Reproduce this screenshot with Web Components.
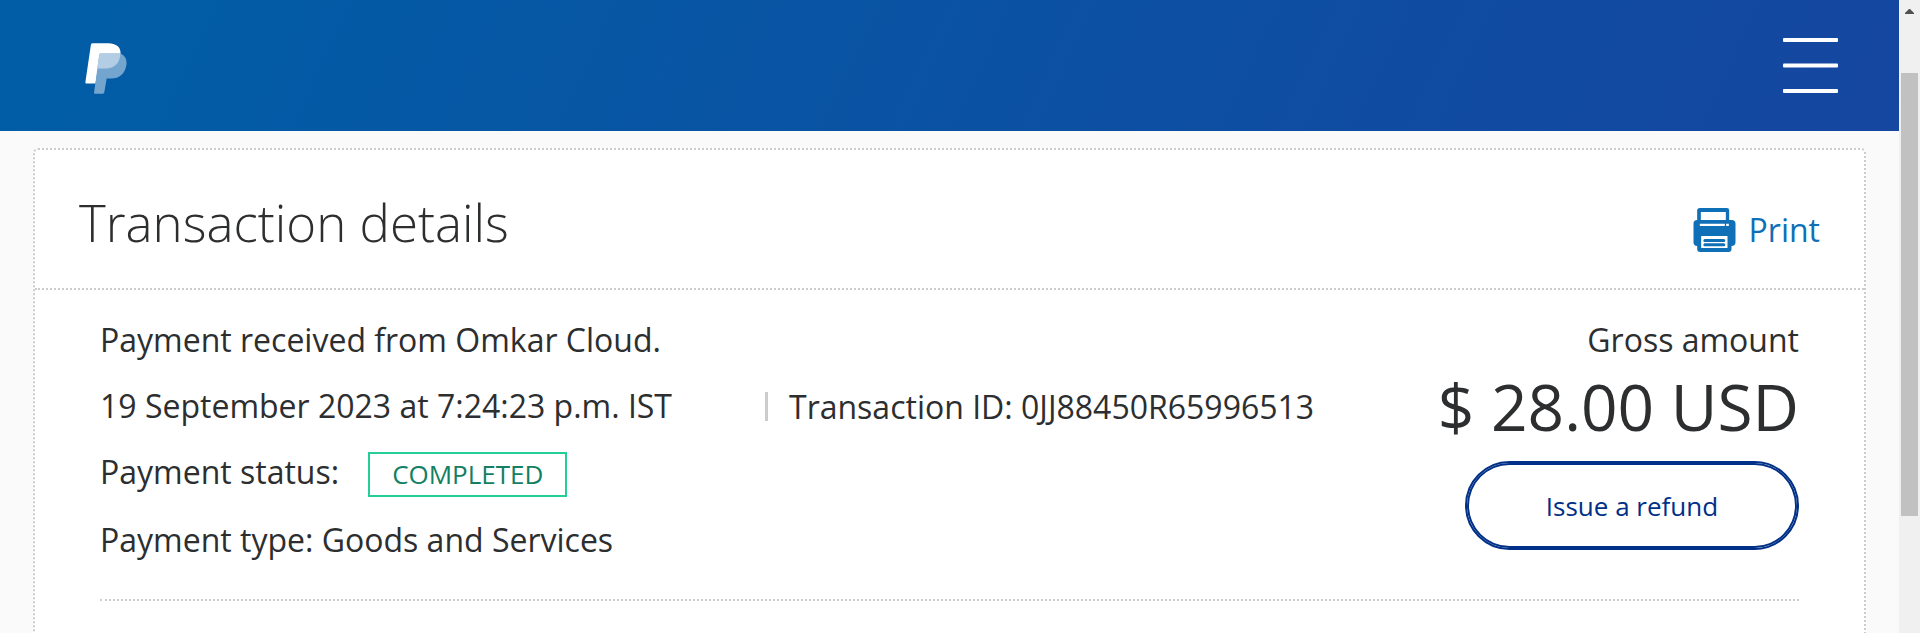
<!DOCTYPE html>
<html lang="en">
<head>
<meta charset="utf-8">
<title>Transaction details</title>
<style>
  html, body { margin: 0; height: 100%; overflow: hidden; }
  body { font-family: "Open Sans", "Noto Sans", sans-serif; font-size: 32px; color: #2c2e2f; background: #fafafa; }
</style>
</head>
<body>
<app-shell>
  <site-header></site-header>
  <transaction-card heading="Transaction details">
    <detail-row>Payment received from Omkar Cloud.</detail-row>
    <detail-row>19 September 2023 at 7:24:23 p.m. IST<span slot="second">Transaction ID: 0JJ88450R65996513</span></detail-row>
    <detail-row>Payment status:<status-badge>COMPLETED</status-badge></detail-row>
    <detail-row>Payment type: Goods and Services</detail-row>
    <amount-panel slot="aside" label="Gross amount" value="$ 28.00 USD">Issue a refund</amount-panel>
  </transaction-card>
</app-shell>

<script>
  const define = (name, render) => customElements.define(name, class extends HTMLElement {
    connectedCallback() {
      if (this.shadowRoot) return;
      this.attachShadow({ mode: "open" }).innerHTML = render(this);
    }
  });

  define("app-shell", () => `
    <style>
      :host { display: flex; height: 100vh; overflow: hidden; }
      main { flex: 1; min-width: 0; overflow: hidden; }
    </style>
    <main><slot></slot></main>
    <scroll-rail></scroll-rail>`);

  define("scroll-rail", () => `
    <style>
      :host { display: flex; flex-direction: column; flex: 0 0 21px; box-sizing: border-box; background: #f0f0f0; padding: 9px 2px 0; }
      svg { display: block; width: 9px; height: 5px; margin: 0 4px 59px; }
      div { height: 70vh; background: #c1c1c1; }
    </style>
    <svg viewBox="0 0 9 5" aria-hidden="true"><path d="M4 0h1l4 4v1H0V4z" fill="#505050"/></svg>
    <div></div>`);

  define("site-header", () => `
    <style>
      :host { display: block; }
      header { display: flex; align-items: center; justify-content: space-between; height: 131px; padding: 0 61px 0 85px; box-sizing: border-box; background: linear-gradient(115deg, #005ea6, #1546a0); }
      a, button, svg { display: block; }
      a { padding-top: 6px; }
      button { padding: 0; border: 0; background: none; cursor: pointer; }
    </style>
    <header>
      <a href="#" aria-label="PayPal">
        <svg width="42" height="51" viewBox="75 68 124 152">
          <path d="M97 69H143C171 69 183 84 180 104C176 129 160 144 136 144H113L106 189H78Q75 189 75.500 185L92 73Q93 69 97 69Z" fill="#fff"/>
          <path d="M121 99H180C194 105 200 117 198 132C194 160 177 174 153 174H139L132 215Q131 219 128 219H104Q101 219 101.500 215L117 103Q118 99 121 99Z" fill="#74a5cf"/>
          <path d="M121 99H180C179 127 162 144 136 144H111L117 103Q118 99 121 99Z" fill="#b3cde5"/>
        </svg>
      </a>
      <button type="button" aria-label="Menu">
        <svg width="55" height="55" viewBox="0 0 55 55" fill="#fff"><rect width="55" height="4" y="0" rx="1"/><rect width="55" height="4" y="25.500" rx="1"/><rect width="55" height="4" y="51" rx="1"/></svg>
      </button>
    </header>`);

  define("print-link", () => `
    <style>
      :host { display: block; }
      a { display: flex; align-items: baseline; gap: 13px; color: #0f6fb7; text-decoration: none; }
      svg { align-self: center; }
    </style>
    <a href="#">
      <svg width="43" height="44" viewBox="96 78 128 132" aria-hidden="true">
        <path fill="currentColor" fill-rule="evenodd" d="M116 78H197Q204 78 204 85V114H212Q223 114 223 125V181Q223 192 211 192V201Q211 210 202 210H117Q108 210 108 201V192Q97 192 97 181V125Q97 114 108 114V86Q108 78 116 78ZM119 90V114H194V90ZM116 125V132H191V125ZM195 125V132H203V125ZM120 162V198H199V162Z"/>
        <path stroke="currentColor" stroke-width="9" stroke-linecap="round" d="M131 175.500H188M131 188H188"/>
      </svg>
      <span>Print</span>
    </a>`);

  define("transaction-card", el => `
    <style>
      :host { display: block; margin: 17px 33px 0; min-height: 100vh; box-sizing: border-box; background: #fff; border: 2px dotted #ccc; border-radius: 5px; }
      header { display: flex; align-items: baseline; justify-content: space-between; box-sizing: border-box; height: 140px; padding: 38px 44px 0; border-bottom: 2px dotted #ccc; }
      h1 { margin: 0; font-size: 51px; font-weight: 300; line-height: 68px; }
      section { display: flex; justify-content: space-between; align-items: flex-start; margin: 0 65px; padding: 17px 0 26px; border-bottom: 2px dotted #ccc; }
      .rows { flex: 1; min-width: 0; display: grid; }
    </style>
    <header><h1>${el.getAttribute("heading")}</h1><print-link></print-link></header>
    <section>
      <div class="rows"><slot></slot></div>
      <slot name="aside"></slot>
    </section>`);

  define("detail-row", el => {
    const second = el.querySelector('[slot="second"]');
    return `
    <style>
      :host { display: flex; align-items: center; line-height: 66px; white-space: nowrap; }
      :host(:last-of-type) { margin-top: 2px; }
      .first { flex: ${second ? "0 1 665px" : "0 1 auto"}; }
      .second { border-left: 3px solid #ccc; padding-left: 21px; line-height: 29px; }
    </style>
    <div class="first"><slot></slot></div>
    ${second ? '<div class="second"><slot name="second"></slot></div>' : ""}`;
  });

  define("status-badge", () => `
    <style>
      :host { display: inline-block; margin-left: 29px; padding: 0 22px; border: 2px solid #23ce98; color: #138062; font-size: 26px; line-height: 41px; }
    </style>
    <slot></slot>`);

  define("amount-panel", el => `
    <style>
      :host { display: flex; flex-direction: column; align-items: flex-end; white-space: nowrap; }
      .label { line-height: 66px; }
      .value { font-size: 64px; line-height: 68px; }
      button { width: 334px; height: 89px; margin-top: 20px; padding: 0; border: 2px solid #003087; box-shadow: inset 0 0 0 2px #003087; border-radius: 45px; background: #fff; color: #003087; font-family: inherit; font-size: 26px; cursor: pointer; }
    </style>
    <div class="label">${el.getAttribute("label")}</div>
    <div class="value">${el.getAttribute("value")}</div>
    <button type="button"><slot></slot></button>`);
</script>
</body>
</html>
